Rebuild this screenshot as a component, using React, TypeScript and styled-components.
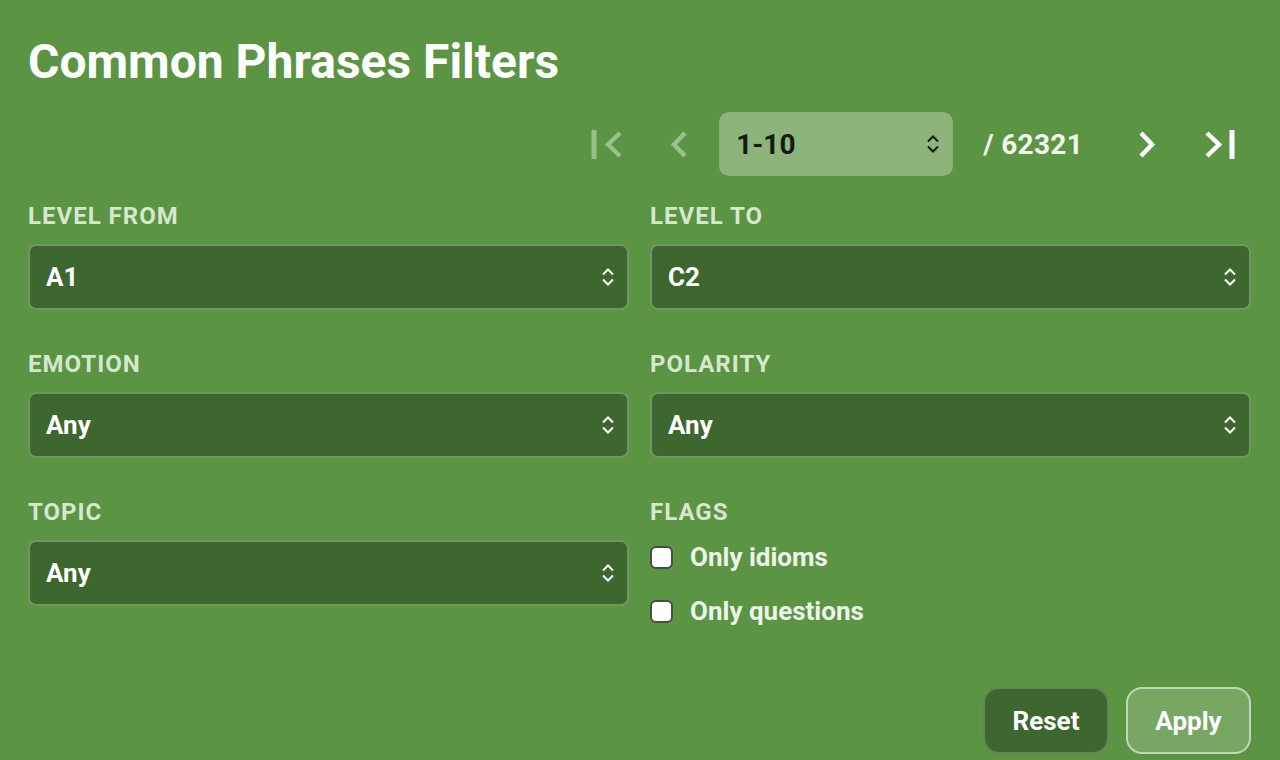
import styled, { createGlobalStyle } from "styled-components";

const GlobalStyle = createGlobalStyle`
  html, body {
    margin: 0;
    padding: 0;
    background: #5b9443;
    font-family: Roboto, "Liberation Sans", sans-serif;
  }
  * { box-sizing: border-box; }
`;

const Panel = styled.div`
  width: 1280px;
  height: 760px;
  overflow: hidden;
  padding: 34px 29px 0 28px;
  background: #5b9443;
  color: #ffffff;
`;

const Title = styled.h1`
  margin: 0;
  font-size: 48px;
  line-height: 56px;
  font-weight: 700;
  color: #ffffff;
`;

const Pager = styled.div`
  display: flex;
  align-items: center;
  justify-content: flex-end;
  margin-top: 22px;
  padding-right: 9px;
  height: 64px;
`;

const IconButton = styled.button<{ $disabled?: boolean; $space?: number }>`
  width: 44px;
  height: 44px;
  display: flex;
  align-items: center;
  justify-content: center;
  padding: 0;
  border: none;
  background: transparent;
  color: ${(p) => (p.$disabled ? "rgba(255,255,255,0.4)" : "#ffffff")};
  margin-left: ${(p) => p.$space ?? 0}px;
  cursor: ${(p) => (p.$disabled ? "default" : "pointer")};
`;

const PageSelectWrap = styled.div`
  position: relative;
  width: 234px;
  height: 64px;
  margin-left: 18px;
`;

const PageSelect = styled.select`
  appearance: none;
  width: 100%;
  height: 100%;
  border: none;
  border-radius: 10px;
  background: rgba(255, 255, 255, 0.3);
  color: #151a13;
  font-family: inherit;
  font-size: 28px;
  font-weight: 700;
  padding: 0 17px;
  outline: none;
`;

const PageCount = styled.span`
  margin-left: 30px;
  margin-right: 42px;
  font-size: 28px;
  font-weight: 700;
  letter-spacing: 0.3px;
  color: #f2f7ef;
`;

const Grid = styled.div`
  display: grid;
  grid-template-columns: 1fr 1fr;
  column-gap: 21px;
  row-gap: 40px;
  margin-top: 26px;
`;

const Field = styled.div`
  display: flex;
  flex-direction: column;
`;

const Label = styled.div`
  font-size: 24px;
  line-height: 28px;
  font-weight: 700;
  letter-spacing: 1px;
  color: #d6e7ce;
  text-transform: uppercase;
  margin-bottom: 14px;
`;

const SelectWrap = styled.div`
  position: relative;
  height: 66px;
`;

const Select = styled.select`
  appearance: none;
  width: 100%;
  height: 100%;
  border: 2px solid #71965f;
  border-radius: 8px;
  background: #3e672f;
  color: #ffffff;
  font-family: inherit;
  font-size: 26px;
  font-weight: 700;
  padding: 0 16px;
  outline: none;
`;

const Caret = styled.svg<{ $dark?: boolean }>`
  position: absolute;
  right: ${(p) => (p.$dark ? 13 : 14)}px;
  top: 50%;
  transform: translateY(-50%);
  pointer-events: none;
  color: ${(p) => (p.$dark ? "#151a13" : "#ffffff")};
`;

const Checks = styled.div`
  display: flex;
  flex-direction: column;
  gap: 24px;
  padding-top: 2px;
`;

const CheckRow = styled.label`
  display: flex;
  align-items: center;
  gap: 17px;
  font-size: 26px;
  line-height: 30px;
  font-weight: 700;
  color: #eef4ea;
  cursor: pointer;
`;

const Check = styled.input`
  appearance: none;
  width: 23px;
  height: 23px;
  margin: 0;
  border: 2px solid #4a4a4a;
  border-radius: 6px;
  background: #ffffff;
`;

const Actions = styled.div`
  display: flex;
  justify-content: flex-end;
  gap: 17px;
  margin-top: 61px;
`;

const ActionButton = styled.button<{ $primary?: boolean }>`
  height: 67px;
  width: ${(p) => (p.$primary ? 125 : 126)}px;
  border-radius: 16px;
  border: 2px solid
    ${(p) => (p.$primary ? "rgba(255,255,255,0.55)" : "rgba(255,255,255,0.2)")};
  background: ${(p) => (p.$primary ? "rgba(255,255,255,0.18)" : "#3e672f")};
  color: #ffffff;
  font-family: inherit;
  font-size: 26px;
  font-weight: 700;
  cursor: pointer;
`;

function Chevron({ dir }: { dir: "left" | "right" }) {
  const pts = dir === "left" ? "16,3 5,14.5 16,26" : "4,3 15,14.5 4,26";
  return (
    <svg width="20" height="29" viewBox="0 0 20 29" fill="none">
      <polyline points={pts} stroke="currentColor" strokeWidth="4.5" />
    </svg>
  );
}

function EdgeChevron({ dir }: { dir: "first" | "last" }) {
  return dir === "first" ? (
    <svg width="34" height="29" viewBox="0 0 34 29" fill="none">
      <line x1="3" y1="0" x2="3" y2="29" stroke="currentColor" strokeWidth="5" />
      <polyline points="29,3 17,14.5 29,26" stroke="currentColor" strokeWidth="4.5" />
    </svg>
  ) : (
    <svg width="34" height="29" viewBox="0 0 34 29" fill="none">
      <polyline points="4,3 16,14.5 4,26" stroke="currentColor" strokeWidth="4.5" />
      <line x1="29" y1="0" x2="29" y2="29" stroke="currentColor" strokeWidth="5" />
    </svg>
  );
}

function UpDown({ dark }: { dark?: boolean }) {
  return (
    <Caret $dark={dark} width="14" height="20" viewBox="0 0 14 20" fill="none">
      <polyline points="2,7.5 7,2.5 12,7.5" stroke="currentColor" strokeWidth="2" />
      <polyline points="2,12.5 7,17.5 12,12.5" stroke="currentColor" strokeWidth="2" />
    </Caret>
  );
}

function FilterSelect({ label, value }: { label: string; value: string }) {
  return (
    <Field>
      <Label>{label}</Label>
      <SelectWrap>
        <Select defaultValue={value}>
          <option>{value}</option>
        </Select>
        <UpDown />
      </SelectWrap>
    </Field>
  );
}

export default function App() {
  return (
    <>
      <GlobalStyle />
      <Panel>
        <Title>Common Phrases Filters</Title>

        <Pager>
          <IconButton $disabled aria-label="First page">
            <EdgeChevron dir="first" />
          </IconButton>
          <IconButton $disabled $space={27} aria-label="Previous page">
            <Chevron dir="left" />
          </IconButton>
          <PageSelectWrap>
            <PageSelect defaultValue="1-10">
              <option>1-10</option>
            </PageSelect>
            <UpDown dark />
          </PageSelectWrap>
          <PageCount>/ 62321</PageCount>
          <IconButton aria-label="Next page">
            <Chevron dir="right" />
          </IconButton>
          <IconButton $space={29} aria-label="Last page">
            <EdgeChevron dir="last" />
          </IconButton>
        </Pager>

        <Grid>
          <FilterSelect label="Level from" value="A1" />
          <FilterSelect label="Level to" value="C2" />
          <FilterSelect label="Emotion" value="Any" />
          <FilterSelect label="Polarity" value="Any" />
          <FilterSelect label="Topic" value="Any" />
          <Field>
            <Label>Flags</Label>
            <Checks>
              <CheckRow>
                <Check type="checkbox" />
                Only idioms
              </CheckRow>
              <CheckRow>
                <Check type="checkbox" />
                Only questions
              </CheckRow>
            </Checks>
          </Field>
        </Grid>

        <Actions>
          <ActionButton>Reset</ActionButton>
          <ActionButton $primary>Apply</ActionButton>
        </Actions>
      </Panel>
    </>
  );
}
